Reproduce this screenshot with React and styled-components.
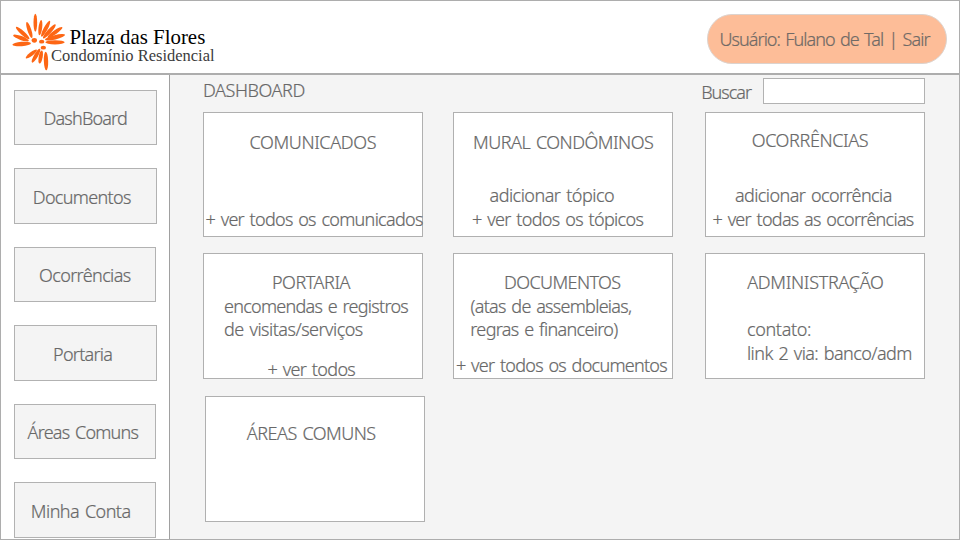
import React from 'react';
import styled, { createGlobalStyle } from 'styled-components';

const GlobalStyle = createGlobalStyle`
  *, *::before, *::after { box-sizing: border-box; }
  body { margin: 0; overflow: hidden; }
`;

const Page = styled.div`
  width: 960px;
  height: 540px;
  display: flex;
  flex-direction: column;
  border: 1px solid #adadad;
  background: #fff;
  color: #686868;
  font: 300 18px/24px "Noto Sans", "Open Sans", sans-serif;
  overflow: hidden;
`;

const Header = styled.header`
  flex: 0 0 74px;
  display: flex;
  justify-content: space-between;
  align-items: flex-start;
  padding: 13px 12px 0 9px;
  border-bottom: 2px solid #adadad;
`;

const Brand = styled.div`
  display: flex;
  margin-top: -3px;
`;

const Flower = styled.svg`
  width: 60px;
  height: 62px;
  flex: none;
  fill: #fd6614;
`;

const BrandText = styled.div`
  margin-left: -19px;
  padding-top: 17px;
  font-family: "Liberation Serif", serif;
  font-weight: 400;
  white-space: nowrap;
`;

const BrandName = styled.div`
  padding-left: 18.5px;
  font-size: 20.9px;
  line-height: 18px;
  color: #000;
`;

const BrandTagline = styled.div`
  margin-top: 1px;
  font-size: 16.5px;
  line-height: 18px;
  color: #3c3c3c;
`;

const UserPill = styled.div`
  width: 240px;
  height: 50px;
  padding: 12px 0 0 11.5px;
  border: 1px solid #dcd3ce;
  border-radius: 25px;
  background: #fdbd98;
  color: #706a66;
`;

const Body = styled.div`
  flex: 1;
  display: flex;
  min-height: 0;
`;

const Sidebar = styled.nav`
  flex: 0 0 169px;
  display: flex;
  flex-direction: column;
  gap: 23px;
  padding: 15px 0 0 13px;
  border-right: 1px solid #a0a0a0;
`;

const NavButton = styled.a`
  flex: none;
  width: ${(p) => p.$w}px;
  height: ${(p) => p.$h}px;
  padding-top: ${(p) => p.$top}px;
  border: 1px solid #b2b2b2;
  background: #f4f4f4;
`;

const Main = styled.main`
  flex: 1;
  padding: 3px 0 0 33px;
  background: #f4f4f4;
`;

const Toolbar = styled.div`
  display: flex;
  justify-content: space-between;
  width: 722px;
  height: 34px;
`;

const Search = styled.label`
  display: flex;
  gap: 12px;
  padding-top: 2px;
`;

const SearchInput = styled.input`
  width: 162px;
  height: 26px;
  margin-top: -2px;
  padding: 0 6px;
  border: 1px solid #b2b2b2;
  border-radius: 0;
  background: #fff;
  font: inherit;
  color: inherit;
  outline: none;
`;

const Cards = styled.div`
  display: grid;
  grid-template-columns: 250px 252px 220px;
  grid-template-rows: 141px 143px 126px;
`;

const Card = styled.section`
  width: 220px;
  height: ${(p) => p.$h || 126}px;
  padding-top: ${(p) => p.$top}px;
  margin-left: ${(p) => p.$shift || 0}px;
  border: 1px solid #b0b0b0;
  background: #fff;
`;

// Extra room between words, taken back from the tracking so a line keeps its width
const WORD_GAP = 1.6;
const tracking = ({ $track = 0, children }) => {
  const spaces = children.split(' ').length - 1;
  return $track - (WORD_GAP * spaces) / (children.length - 1);
};

const Line = styled.div`
  margin-top: ${(p) => p.$gap || 0}px;
  padding-left: ${(p) => (p.$x ? p.$x + 0.5 : 0)}px;
  letter-spacing: ${tracking}px;
  word-spacing: ${WORD_GAP}px;
  -webkit-text-stroke: 0.2px currentColor;
  white-space: nowrap;
`;

const nav = [
  { text: 'DashBoard', w: 143, h: 55, top: 15, x: 28, track: -0.81 },
  { text: 'Documentos', w: 143, h: 56, top: 16, x: 17.3, track: -0.67 },
  { text: 'Ocorrências', w: 142, h: 55, top: 15, x: 23.5, track: -0.62 },
  { text: 'Portaria', w: 143, h: 56, top: 16, x: 37.5, track: -0.72 },
  { text: 'Áreas Comuns', w: 142, h: 55, top: 15, x: 12, track: -0.61 },
  { text: 'Minha Conta', w: 142, h: 56, top: 16, x: 15.3, track: -0.37 },
];

const cards = [
  { h: 125, top: 17, lines: [
    ['COMUNICADOS', 45, 0, -0.37],
    ['+ ver todos os comunicados', 1, 53, -0.45],
  ] },
  { h: 125, top: 17, lines: [
    ['MURAL CONDÔMINOS', 18.5, 0, -0.4],
    ['adicionar tópico', 35, 29, -0.4],
    ['+ ver todos os tópicos', 17.5, 0, -0.36],
  ] },
  { h: 125, top: 15, lines: [
    ['OCORRÊNCIAS', 45.2, 0, -0.38],
    ['adicionar ocorrência', 28.5, 31, -0.5],
    ['+ ver todas as ocorrências', 6, 0, -0.46],
  ] },
  { top: 16, lines: [
    ['PORTARIA', 67.5, 0, -0.48],
    ['encomendas e registros', 19.5, 0, -0.57],
    ['de visitas/serviços', 19.5, -1, -0.42],
    ['+ ver todos', 63, 16, -0.34],
  ] },
  { top: 16, lines: [
    ['DOCUMENTOS', 49.5, 0, -0.59],
    ['(atas de assembleias,', 16, 0, -0.56],
    ['regras e financeiro)', 15.8, -1, -0.5],
    ['+ ver todos os documentos', 1.5, 12, -0.46],
  ] },
  { top: 16, lines: [
    ['ADMINISTRAÇÃO', 40.7, 0, -0.3],
    ['contato:', 40.5, 23, -0.35],
    ['link 2 via: banco/adm', 40.5, 0, -0.34],
  ] },
  { top: 24, shift: 2, lines: [['ÁREAS COMUNS', 40.3, 0, -0.37]] },
];

// Each petal: centre x, centre y, half length, half width, angle from the x axis
const petals = [
  [91, 53, 27, 5.5, 90],
  [73, 75, 25, 6, 72],
  [53, 84, 27, 6, 42],
  [48, 99, 25, 6, 20],
  [50, 117, 28, 6.5, -5],
  [106, 68, 23, 5.5, -83],
  [122, 71, 27, 6, -62],
  [133, 79, 28, 6, -48],
  [150, 82, 27, 6, -35],
  [150, 97, 31, 6.5, -14],
  [150, 112, 29, 6.5, 0],
  [79, 147, 21, 5.5, -38],
  [93, 152, 24, 6, -60],
  [107, 156, 20, 6, -80],
  [123, 168, 28, 6.5, 88],
  [88, 106, 8, 7, 0],
  [110, 110, 8, 5.5, 0],
  [115, 128, 8, 5.5, 0],
];

function Logo() {
  return (
    <Brand>
      <Flower viewBox="15 18 180 186">
        {petals.map(([cx, cy, rx, ry, a], i) => (
          <ellipse key={i} cx={cx} cy={cy} rx={rx} ry={ry} transform={`rotate(${a} ${cx} ${cy})`} />
        ))}
      </Flower>
      <BrandText>
        <BrandName>Plaza das Flores</BrandName>
        <BrandTagline>Condomínio Residencial</BrandTagline>
      </BrandText>
    </Brand>
  );
}

export default function App() {
  return (
    <Page>
      <GlobalStyle />
      <Header>
        <Logo />
        <UserPill>
          <Line $track={-0.67}>Usuário: Fulano de Tal | Sair</Line>
        </UserPill>
      </Header>
      <Body>
        <Sidebar>
          {nav.map((n) => (
            <NavButton key={n.text} $w={n.w} $h={n.h} $top={n.top}>
              <Line $x={n.x} $track={n.track}>{n.text}</Line>
            </NavButton>
          ))}
        </Sidebar>
        <Main>
          <Toolbar>
            <Line $track={-0.42}>DASHBOARD</Line>
            <Search>
              <Line $track={-1.0}>Buscar</Line>
              <SearchInput aria-label="Buscar" />
            </Search>
          </Toolbar>
          <Cards>
            {cards.map((c) => (
              <Card key={c.lines[0][0]} $h={c.h} $top={c.top} $shift={c.shift}>
                {c.lines.map(([text, x, gap, track]) => (
                  <Line key={text} $x={x} $gap={gap} $track={track}>{text}</Line>
                ))}
              </Card>
            ))}
          </Cards>
        </Main>
      </Body>
    </Page>
  );
}
